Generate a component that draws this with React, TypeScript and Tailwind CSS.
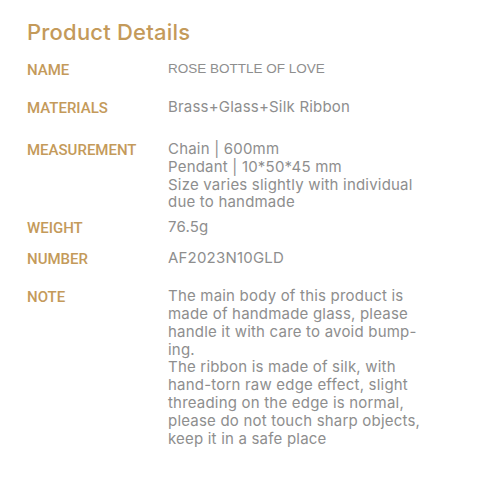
export default function App() {
  const rows: { label: string; lines: string[]; cls: string; valCls?: string }[] = [
    {
      label: "NAME",
      lines: ["ROSE BOTTLE OF LOVE"],
      cls: "mt-[14px]",
      valCls: "text-[13.5px] [font-family:'Liberation_Sans',sans-serif]",
    },
    { label: "MATERIALS", lines: ["Brass+Glass+Silk Ribbon"], cls: "mt-[20px]" },
    {
      label: "MEASUREMENT",
      lines: ["Chain | 600mm", "Pendant | 10*50*45 mm", "Size varies slightly with individual", "due to handmade"],
      cls: "mt-[24px]",
    },
    { label: "WEIGHT", lines: ["76.5g"], cls: "mt-[7px]" },
    { label: "NUMBER", lines: ["AF2023N10GLD"], cls: "mt-[13px]" },
    {
      label: "NOTE",
      lines: [
        "The main body of this product is",
        "made of handmade glass, please",
        "handle it with care to avoid bump-",
        "ing.",
        "The ribbon is made of silk, with",
        "hand-torn raw edge effect, slight",
        "threading on the edge is normal,",
        "please do not touch sharp objects,",
        "keep it in a safe place",
      ],
      cls: "mt-[20px]",
    },
  ]

  return (
    <div className="min-h-[480px] w-[480px] bg-white px-[27px] pt-[18px]">
      <h1 className="text-[22px] font-medium leading-[28px] tracking-[0.2px] text-[#c49a5a] [font-family:Inter,sans-serif]">
        Product Details
      </h1>
      {rows.map((r) => (
        <div key={r.label} className={`flex ${r.cls}`}>
          <div className="w-[141px] shrink-0 pt-[2px] text-[15px] font-medium leading-[16px] text-[#c49a5a] [font-family:Roboto,sans-serif]">
            {r.label}
          </div>
          <div
            className={`leading-[17.8px] text-[#8e8e8e] ${
              r.valCls ?? "text-[15px] tracking-[0.2px] [font-family:Inter,sans-serif]"
            }`}
          >
            {r.lines.map((l, i) => (
              <div key={i}>{l}</div>
            ))}
          </div>
        </div>
      ))}
    </div>
  )
}
